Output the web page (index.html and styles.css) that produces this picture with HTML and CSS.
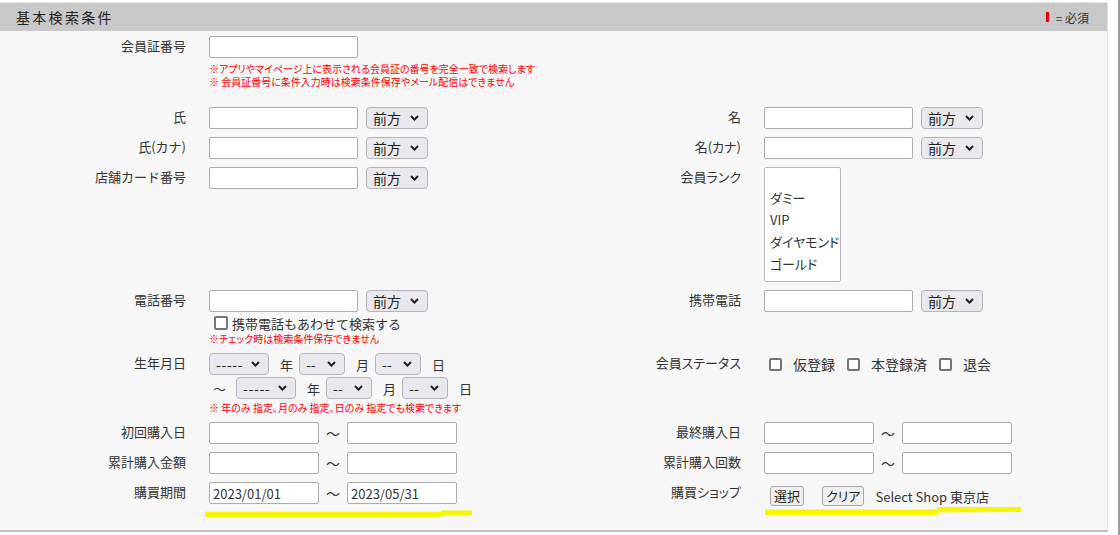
FILE: index.html
```html
<!DOCTYPE html>
<html lang="ja">
<head>
<meta charset="utf-8">
<title>基本検索条件</title>
<link rel="stylesheet" href="styles.css">
</head>
<body>
<div class="frame">
  <section class="panel">
    <header class="panel-head">
      <h2 class="panel-title">基本検索条件</h2>
      <span class="legend"><i class="req-mark"></i>= 必須</span>
    </header>
    <div class="form-grid">
      <!-- row 1 -->
      <div class="lbl">会員証番号</div>
      <div class="fld fld-first">
        <input class="txt txt-block" type="text">
        <p class="note note-top">※アプリやマイページ上に表示される会員証の番号を完全一致で検索します<br>※ 会員証番号に条件入力時は検索条件保存やメール配信はできません</p>
      </div>
      <div class="lbl lbl-r"></div>
      <div class="fld"></div>

      <!-- row 2 -->
      <div class="lbl">氏</div>
      <div class="fld line">
        <input class="txt" type="text">
        <span class="sel sel-mode"><select><option>前方</option></select><svg class="chev" viewBox="0 0 9 6"><path d="M1 1 L4.5 4.6 L8 1"/></svg></span>
      </div>
      <div class="lbl lbl-r">名</div>
      <div class="fld line">
        <input class="txt" type="text">
        <span class="sel sel-mode"><select><option>前方</option></select><svg class="chev" viewBox="0 0 9 6"><path d="M1 1 L4.5 4.6 L8 1"/></svg></span>
      </div>

      <!-- row 3 -->
      <div class="lbl">氏(カナ)</div>
      <div class="fld line">
        <input class="txt" type="text">
        <span class="sel sel-mode"><select><option>前方</option></select><svg class="chev" viewBox="0 0 9 6"><path d="M1 1 L4.5 4.6 L8 1"/></svg></span>
      </div>
      <div class="lbl lbl-r">名(カナ)</div>
      <div class="fld line">
        <input class="txt" type="text">
        <span class="sel sel-mode"><select><option>前方</option></select><svg class="chev" viewBox="0 0 9 6"><path d="M1 1 L4.5 4.6 L8 1"/></svg></span>
      </div>

      <!-- row 4 -->
      <div class="lbl">店舗カード番号</div>
      <div class="fld line">
        <input class="txt" type="text">
        <span class="sel sel-mode"><select><option>前方</option></select><svg class="chev" viewBox="0 0 9 6"><path d="M1 1 L4.5 4.6 L8 1"/></svg></span>
      </div>
      <div class="lbl lbl-r">会員ランク</div>
      <div class="fld">
        <div class="listbox">
          <div class="opt opt-blank"></div>
          <div class="opt">ダミー</div>
          <div class="opt">VIP</div>
          <div class="opt">ダイヤモンド</div>
          <div class="opt">ゴールド</div>
        </div>
      </div>

      <!-- row 5 -->
      <div class="lbl">電話番号</div>
      <div class="fld">
        <div class="line">
          <input class="txt" type="text">
          <span class="sel sel-mode"><select><option>前方</option></select><svg class="chev" viewBox="0 0 9 6"><path d="M1 1 L4.5 4.6 L8 1"/></svg></span>
        </div>
        <label class="check-line"><input class="cb cb-big" type="checkbox"><span>携帯電話もあわせて検索する</span></label>
        <p class="note">※チェック時は検索条件保存できません</p>
      </div>
      <div class="lbl lbl-r">携帯電話</div>
      <div class="fld line">
        <input class="txt" type="text">
        <span class="sel sel-mode"><select><option>前方</option></select><svg class="chev" viewBox="0 0 9 6"><path d="M1 1 L4.5 4.6 L8 1"/></svg></span>
      </div>

      <!-- row 6 -->
      <div class="lbl">生年月日</div>
      <div class="fld">
        <div class="line">
          <span class="sel sel-y"><select><option>-----</option></select><svg class="chev" viewBox="0 0 9 6"><path d="M1 1 L4.5 4.6 L8 1"/></svg></span>
          <span class="unit">年</span>
          <span class="sel sel-md"><select><option>--</option></select><svg class="chev" viewBox="0 0 9 6"><path d="M1 1 L4.5 4.6 L8 1"/></svg></span>
          <span class="unit">月</span>
          <span class="sel sel-md"><select><option>--</option></select><svg class="chev" viewBox="0 0 9 6"><path d="M1 1 L4.5 4.6 L8 1"/></svg></span>
          <span class="unit">日</span>
        </div>
        <div class="line line-2">
          <span class="tilde-lead">〜</span>
          <span class="sel sel-y"><select><option>-----</option></select><svg class="chev" viewBox="0 0 9 6"><path d="M1 1 L4.5 4.6 L8 1"/></svg></span>
          <span class="unit">年</span>
          <span class="sel sel-md"><select><option>--</option></select><svg class="chev" viewBox="0 0 9 6"><path d="M1 1 L4.5 4.6 L8 1"/></svg></span>
          <span class="unit">月</span>
          <span class="sel sel-md"><select><option>--</option></select><svg class="chev" viewBox="0 0 9 6"><path d="M1 1 L4.5 4.6 L8 1"/></svg></span>
          <span class="unit">日</span>
        </div>
        <p class="note note-gap">※ 年のみ 指定、月のみ 指定、日のみ 指定でも検索できます</p>
      </div>
      <div class="lbl lbl-r">会員ステータス</div>
      <div class="fld">
        <div class="status">
          <input class="cb" type="checkbox"><span class="st-lbl">仮登録</span>
          <input class="cb" type="checkbox"><span class="st-lbl">本登録済</span>
          <input class="cb" type="checkbox"><span class="st-lbl">退会</span>
        </div>
      </div>

      <!-- row 7 -->
      <div class="lbl">初回購入日</div>
      <div class="fld line">
        <input class="txt txt-s" type="text"><span class="tilde">〜</span><input class="txt txt-s" type="text">
      </div>
      <div class="lbl lbl-r">最終購入日</div>
      <div class="fld line">
        <input class="txt txt-s" type="text"><span class="tilde">〜</span><input class="txt txt-s" type="text">
      </div>

      <!-- row 8 -->
      <div class="lbl">累計購入金額</div>
      <div class="fld line">
        <input class="txt txt-s" type="text"><span class="tilde">〜</span><input class="txt txt-s" type="text">
      </div>
      <div class="lbl lbl-r">累計購入回数</div>
      <div class="fld line">
        <input class="txt txt-s" type="text"><span class="tilde">〜</span><input class="txt txt-s" type="text">
      </div>

      <!-- row 9 -->
      <div class="lbl">購買期間</div>
      <div class="fld line mark-cell">
        <input class="txt txt-s" type="text" value="2023/01/01"><span class="tilde">〜</span><input class="txt txt-s" type="text" value="2023/05/31">
        <svg class="marker marker-l" width="268" height="8" viewBox="0 0 268 8"><rect x="0" y="1.7" width="237" height="5.3" fill="#f6f600"/><rect x="236" y="0.5" width="31" height="5.3" fill="#f6f600"/></svg>
      </div>
      <div class="lbl lbl-r">購買ショップ</div>
      <div class="fld mark-cell">
        <div class="shop">
          <button class="btn btn-sel" type="button">選択</button>
          <button class="btn btn-clr" type="button">クリア</button>
          <span class="shop-name">Select Shop 東京店</span>
        </div>
        <svg class="marker marker-r" width="256" height="9" viewBox="0 0 256 9"><path d="M0 2.5 L172 2.5 L172 0 L256 0 L256 5 L172 5.5 L172 8 L0 8 Z" fill="#f6f600"/></svg>
      </div>
    </div>
  </section>
</div>
</body>
</html>
```

FILE: styles.css
```css
* { box-sizing: border-box; }

body {
  margin: 0;
  background: #ffffff;
  font-family: "Noto Sans CJK JP", "Noto Sans", sans-serif;
  color: #333333;
}

.frame {
  width: 1120px;
  height: 535px;
  padding-top: 2px;
  border-right: 2px solid #9d9d9d;
}

.panel {
  width: 1108px;
  background: #f7f7f7;
  border-top: 1px solid #e2e2e2;
  border-right: 1px solid #e2e2e2;
  border-bottom: 2px solid #bcbcbc;
}

.panel-head {
  height: 28px;
  background: #c8c8c8;
  display: flex;
  align-items: center;
  justify-content: space-between;
  padding: 0 18px 0 16px;
}

.panel-title {
  margin: 0;
  font-size: 14px;
  font-weight: normal;
  letter-spacing: 2.3px;
  color: #222222;
  line-height: 28px;
}

.legend {
  display: flex;
  align-items: center;
  gap: 7px;
  font-size: 12px;
  color: #333333;
}

.req-mark {
  display: block;
  width: 3px;
  height: 10px;
  background: #dd0000;
}

.form-grid {
  display: grid;
  grid-template-columns: 186px 324px 185px 1fr;
  column-gap: 23px;
  row-gap: 8px;
  align-items: start;
  padding: 5px 0 24px;
}

.lbl {
  text-align: right;
  font-size: 13px;
  line-height: 19px;
  color: #333333;
  white-space: nowrap;
}

.lbl-r {
  font-feature-settings: "palt";
}

.fld { position: relative; }

.fld-first { padding-bottom: 11px; }

.line {
  display: flex;
  align-items: center;
}

.line-2 { margin-top: 2px; }

.txt {
  width: 149px;
  height: 22px;
  border: 1px solid #acacac;
  border-radius: 2px;
  background: #ffffff;
  font-family: "Noto Sans CJK JP", sans-serif;
  font-size: 13px;
  color: #333333;
  padding: 0 3px;
  margin: 0;
}

.txt-block { display: block; }

.txt-s { width: 110px; }

.sel {
  position: relative;
  display: block;
  height: 22px;
}

.sel-mode { margin-left: 8px; }

.sel select {
  display: block;
  appearance: none;
  -webkit-appearance: none;
  height: 22px;
  border: 1px solid #b3b3bb;
  border-radius: 4px;
  background: #e9e9ed;
  font-family: "Noto Sans CJK JP", sans-serif;
  font-size: 14px;
  line-height: 20px;
  color: #222222;
  padding: 0 0 1px 6px;
  margin: 0;
}

.sel-mode select { width: 62px; }
.sel-y select { width: 60px; letter-spacing: 0.6px; }
.sel-md select { width: 46px; }

.chev {
  position: absolute;
  right: 9px;
  top: 8px;
  width: 9px;
  height: 6px;
  pointer-events: none;
}

.chev path {
  fill: none;
  stroke: #1e1e1e;
  stroke-width: 2;
}

.unit {
  font-size: 13px;
  margin: 0 6px 0 11px;
  color: #333333;
}

.tilde-lead {
  font-size: 13px;
  margin: 0 10px 0 4px;
  color: #333333;
}

.tilde {
  width: 28px;
  text-align: center;
  font-size: 14px;
  color: #333333;
}

.note {
  margin: 0;
  color: #ff0000;
  font-size: 10px;
  line-height: 13px;
  white-space: nowrap;
  font-feature-settings: "palt";
}

.note-top { margin-top: 4px; }
.note-gap { margin-top: 2px; }

.check-line {
  display: flex;
  align-items: center;
  height: 18px;
  margin-top: 2px;
  font-size: 13px;
  color: #333333;
}

.cb {
  appearance: none;
  -webkit-appearance: none;
  width: 13px;
  height: 13px;
  margin: 0;
  border: 2px solid #74747c;
  border-radius: 2px;
  background: #ffffff;
  flex: none;
}

.cb-big {
  width: 14px;
  height: 14px;
  margin: 0 4px 0 5px;
}

.listbox {
  width: 77px;
  height: 115px;
  border: 1px solid #b8b8b8;
  border-radius: 2px;
  background: #ffffff;
  font-size: 13px;
  font-feature-settings: "palt";
  color: #333333;
  padding-left: 5px;
}

.opt {
  height: 22px;
  line-height: 22px;
  white-space: nowrap;
}

.opt-blank { height: 19px; }

.status {
  display: flex;
  align-items: center;
  height: 22px;
  padding-left: 5px;
}

.st-lbl {
  font-size: 14px;
  margin: 0 12px 0 11px;
  color: #333333;
}

.shop {
  display: flex;
  align-items: center;
  padding-top: 4px;
  padding-left: 6px;
}

.btn {
  height: 20px;
  margin: 0;
  padding: 0 3px;
  border: 1px solid #a6a6a6;
  border-radius: 3px;
  background: #f0f0f0;
  font-family: "Noto Sans CJK JP", sans-serif;
  font-size: 13px;
  font-feature-settings: "palt";
  color: #222222;
  line-height: 18px;
}

.btn-clr { margin-left: 18px; }

.shop-name {
  margin-left: 11px;
  font-size: 13px;
  color: #333333;
}

.marker {
  position: absolute;
  display: block;
}

.marker-l { left: -4px; top: 28px; }
.marker-r { left: 1px; top: 25px; }
```
